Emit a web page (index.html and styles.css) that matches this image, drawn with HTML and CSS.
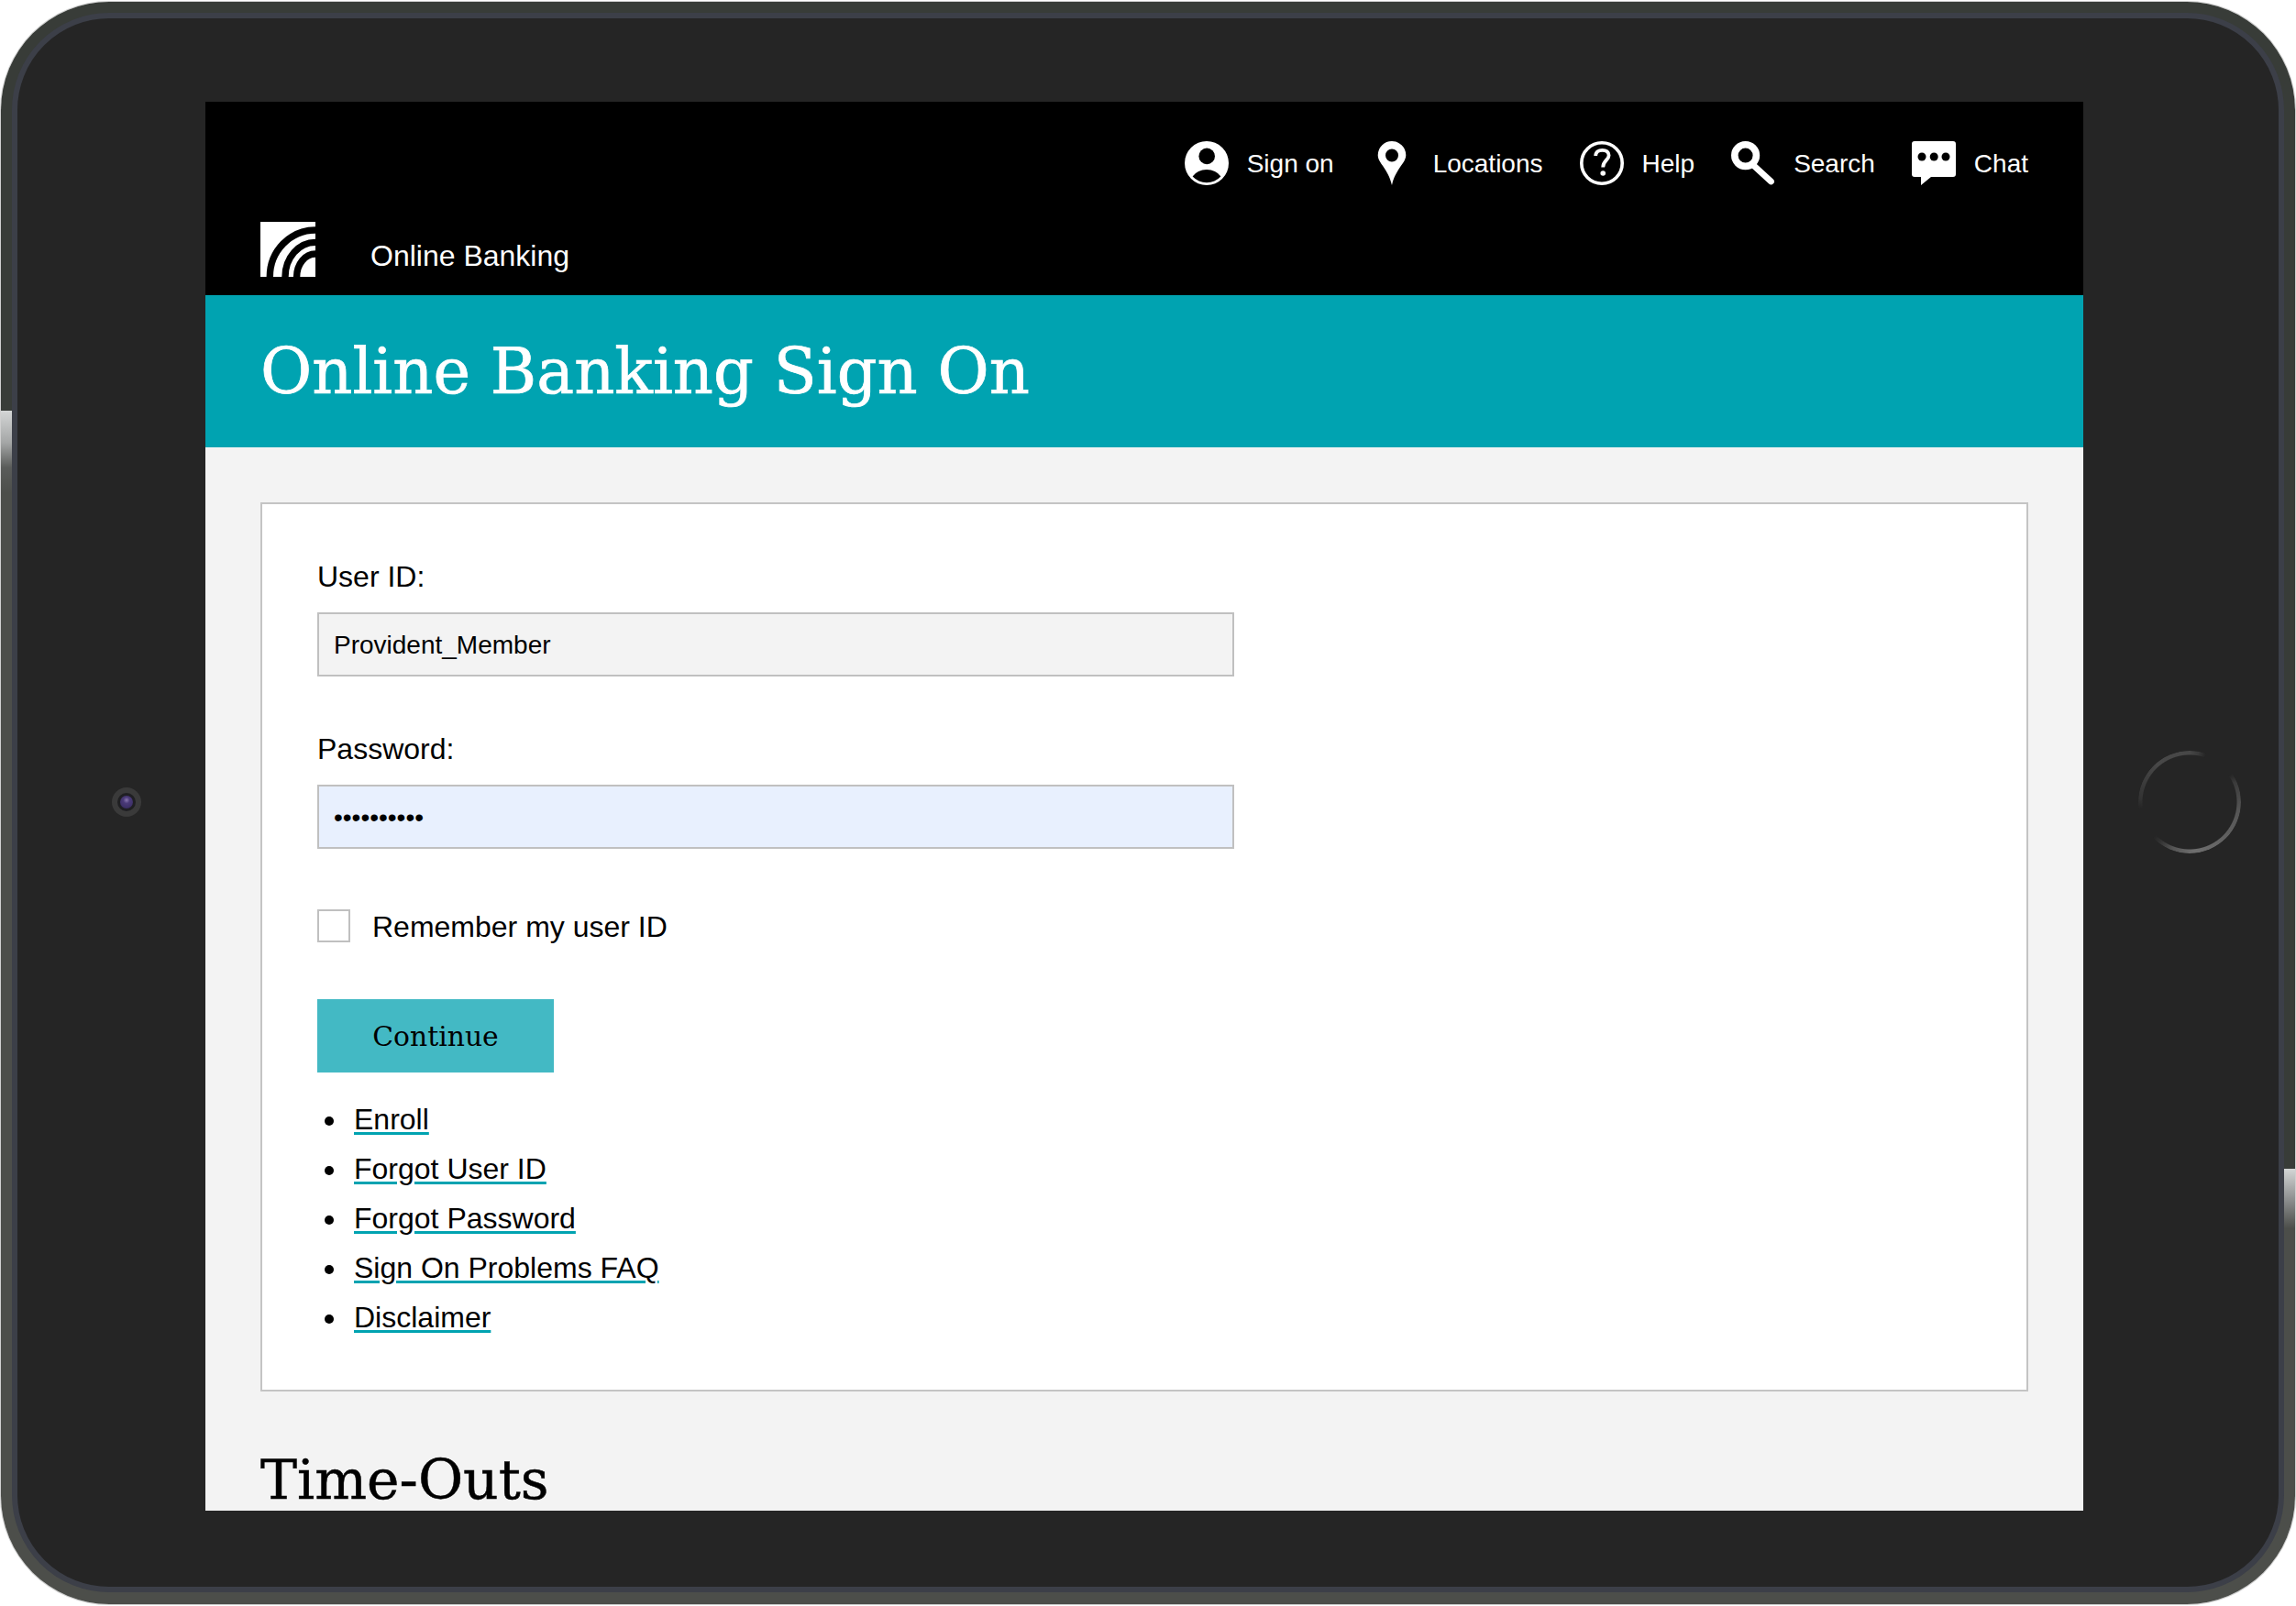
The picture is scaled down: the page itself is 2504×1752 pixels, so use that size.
FILE: index.html
```html
<!DOCTYPE html>
<html lang="en">
<head>
<meta charset="utf-8">
<title>Online Banking Sign On</title>
<link rel="stylesheet" href="styles.css">
</head>
<body>
<div class="device">
  <span class="glare glare-left"></span>
  <span class="glare glare-right"></span>
  <div class="bezel">
    <span class="camera"><span class="lens"></span></span>
    <span class="home"></span>
    <div class="screen">
      <header class="site-header">
        <nav class="nav">
          <a class="nav-item">
            <svg class="icon" viewBox="0 0 48 48"><circle cx="24" cy="24" r="24" fill="#fff"/><circle cx="24.2" cy="16.4" r="8.8" fill="#000"/><path d="M8.6 38.5Q14 31 24 31Q34 31 39.4 38.5A21 21 0 0 1 8.6 38.5Z" fill="#000"/></svg>
            <span class="nav-label">Sign on</span>
          </a>
          <a class="nav-item">
            <svg class="icon" viewBox="0 0 48 48"><path fill-rule="evenodd" fill="#fff" d="M23 0A15.3 15.3 0 0 1 38.3 15.3C38.3 24 27 30 23 48C19 30 7.7 24 7.7 15.3A15.3 15.3 0 0 1 23 0ZM23 8.5A7 7 0 1 0 23 22.5A7 7 0 1 0 23 8.5Z"/></svg>
            <span class="nav-label">Locations</span>
          </a>
          <a class="nav-item">
            <svg class="icon" viewBox="0 0 48 48"><circle cx="24" cy="24" r="22.2" fill="none" stroke="#fff" stroke-width="3.6"/><path d="M17.2 16C17.2 11.5 20.5 9.8 24.5 9.8C28.8 9.8 31.6 12 31.6 15.6C31.6 20.6 25.2 21 25.2 28.5" fill="none" stroke="#fff" stroke-width="3.8"/><circle cx="25.2" cy="35" r="2.8" fill="#fff"/></svg>
            <span class="nav-label">Help</span>
          </a>
          <a class="nav-item">
            <svg class="icon" viewBox="0 0 48 48"><circle cx="15.6" cy="15.6" r="11.8" fill="none" stroke="#fff" stroke-width="7.6"/><path d="M25 27L43.5 44" fill="none" stroke="#fff" stroke-width="6.8" stroke-linecap="round"/></svg>
            <span class="nav-label">Search</span>
          </a>
          <a class="nav-item">
            <svg class="icon" viewBox="0 0 48 48"><path fill="#fff" d="M3 0H45A3 3 0 0 1 48 3V36A3 3 0 0 1 45 39H21L10 48L10 39H3A3 3 0 0 1 0 36V3A3 3 0 0 1 3 0Z"/><circle cx="11" cy="17" r="4.5" fill="#000"/><circle cx="24.2" cy="17" r="4.5" fill="#000"/><circle cx="37" cy="17" r="4.5" fill="#000"/></svg>
            <span class="nav-label">Chat</span>
          </a>
        </nav>
        <div class="brand">
          <svg class="logo" viewBox="0 0 60 60">
            <rect width="60" height="60" fill="#fff"/>
            <g fill="none" stroke="#000" stroke-width="7.4">
              <path d="M10.3 60A49.7 51 0 0 1 60 9"/>
              <path d="M27 60A33 37.6 0 0 1 60 22.4"/>
              <path d="M39.6 60A20.4 25 0 0 1 60 35"/>
            </g>
          </svg>
          <span class="brand-name">Online Banking</span>
        </div>
      </header>
      <div class="title-band">
        <h1 class="title">Online Banking Sign On</h1>
      </div>
      <main class="content">
        <form class="card">
          <label class="field-label" for="user">User ID:</label>
          <input class="field" id="user" type="text" value="Provident_Member">
          <label class="field-label field-label-next" for="pass">Password:</label>
          <input class="field field-filled" id="pass" type="password" value="password12">
          <label class="remember"><span class="checkbox"></span><span class="remember-text">Remember my user ID</span></label>
          <button class="continue" type="button">Continue</button>
          <ul class="links">
            <li><a href="#">Enroll</a></li>
            <li><a href="#">Forgot User ID</a></li>
            <li><a href="#">Forgot Password</a></li>
            <li><a href="#">Sign On Problems FAQ</a></li>
            <li><a href="#">Disclaimer</a></li>
          </ul>
        </form>
        <h2 class="section-title">Time-Outs</h2>
      </main>
    </div>
  </div>
</div>
</body>
</html>
```
FILE: styles.css
```css
* { box-sizing: border-box; }
html, body { margin: 0; background: #fff; }
body { padding: 2px 1px; font-family: "Liberation Sans", Arial, sans-serif; color: #000; }

.device {
  position: relative;
  width: 2502px;
  height: 1748px;
  padding: 12px 12px 13px 12px;
  border-radius: 118px;
  background: linear-gradient(to bottom, #383c38 0, #383c38 1273px, #4c4e4a 1338px, #4c4e4a 100%);
  box-shadow: 0 0 0 1px rgba(170,170,170,.55);
}
.glare { position: absolute; width: 12px; }
.glare-left {
  left: 0; top: 446px; height: 892px;
  background: linear-gradient(to bottom, #d4d6d6 0, #a4a6a6 35px, #5a5c5a 62px, #4c4e4a 90px, #4c4e4a 100%);
}
.glare-right {
  right: 0; top: 1273px; height: 65px;
  background: linear-gradient(to bottom, #d4d6d6 0, #8a8c8c 35px, #4c4e4a 100%);
}

.bezel {
  position: relative;
  height: 100%;
  border: 6px solid #3c3f48;
  border-radius: 106px;
  background: #252525;
  padding: 91px 213px 83px 205px;
}
.camera {
  position: absolute;
  left: 103px; top: 839px;
  width: 32px; height: 32px;
  border-radius: 50%;
  background: #3a3a3a;
  display: flex; align-items: center; justify-content: center;
}
.lens {
  width: 20px; height: 20px;
  border-radius: 50%;
  border: 3px solid #1f1f22;
  background: radial-gradient(circle at 50% 35%, #8a78b0 0, #4a3a78 30%, #33285a 100%);
}
.home {
  position: absolute;
  left: 2313px; top: 799px;
  width: 112px; height: 112px;
  border-radius: 50%;
  background: conic-gradient(#474747 0deg, #3a3a3a 10deg, transparent 19deg, transparent 56deg, #3a3a3a 66deg, #555 100deg, #6e6e6e 175deg, #555 200deg, #333 216deg, transparent 226deg, transparent 262deg, #333 274deg, #484848 320deg, #474747 360deg);
  -webkit-mask: radial-gradient(closest-side, transparent calc(100% - 5px), #000 calc(100% - 4px));
  mask: radial-gradient(closest-side, transparent calc(100% - 5px), #000 calc(100% - 4px));
}

.screen {
  height: 100%;
  overflow: hidden;
  background: #f3f3f3;
}

.site-header {
  height: 211px;
  background: #000;
  color: #fff;
  padding: 43px 60px 0;
}
.nav {
  display: flex;
  justify-content: flex-end;
  gap: 40px;
  font-size: 28px;
}
.nav-item { display: flex; align-items: center; gap: 20px; }
.nav-label { padding-top: 2px; line-height: 46px; }
.icon { display: block; width: 48px; height: 48px; }
.brand {
  display: flex;
  align-items: flex-end;
  gap: 60px;
  margin-top: 40px;
}
.logo { display: block; width: 60px; height: 60px; }
.brand-name { font-size: 32px; line-height: 48px; margin-bottom: -1px; }

.title-band {
  height: 166px;
  background: #00a3b1;
  padding: 0 60px;
  display: flex;
  align-items: center;
}
.title {
  margin: 0;
  font-family: "DejaVu Serif", "Liberation Serif", serif;
  font-weight: 400;
  font-size: 68.6px;
  line-height: 72px;
  color: #fff;
  white-space: nowrap;
  -webkit-text-stroke: 0.7px #fff;
}

.content { padding: 60px 60px 0; }
.card {
  display: flex;
  flex-direction: column;
  align-items: flex-start;
  background: #fff;
  border: 2px solid #c4c4c4;
  padding: 55px 60px 52px;
  font-size: 32px;
}
.field-label { display: block; line-height: 48px; margin-bottom: 15px; }
.field-label-next { margin-top: 55px; }
.field {
  display: block;
  width: 1000px;
  height: 70px;
  padding: 2px 16px 0;
  border: 2px solid #c0c0c0;
  border-radius: 0;
  background: #f3f3f3;
  font-family: "Liberation Sans", Arial, sans-serif;
  font-size: 28px;
  color: #000;
  outline: none;
}
.field-filled { background: #e8f0fe; }
.remember {
  display: flex;
  align-items: center;
  gap: 24px;
  margin-top: 66px;
  height: 36px;
  line-height: 36px;
}
.remember-text { padding-top: 2px; }
.checkbox {
  display: block;
  width: 36px; height: 36px;
  border: 2px solid #c0c0c0;
  background: #fff;
}
.continue {
  display: block;
  margin-top: 62px;
  width: 258px;
  height: 80px;
  border: 0;
  border-radius: 0;
  padding: 0;
  background: #43b9c4;
  color: #000;
  font-family: "DejaVu Serif", "Liberation Serif", serif;
  font-size: 29.8px;
}
.links {
  margin: 24px 0 0;
  padding: 0 0 0 8px;
  list-style: none;
  line-height: 54px;
}
.links li {
  display: flex;
  align-items: center;
  gap: 22px;
}
.links li::before {
  content: "";
  width: 10px;
  height: 10px;
  margin-top: 3px;
  border-radius: 50%;
  background: #000;
}
.links a {
  color: #000;
  text-decoration: underline #00a3b1 3px;
  text-underline-offset: 3px;
}

.section-title {
  margin: 60px 0 0;
  font-family: "DejaVu Serif", "Liberation Serif", serif;
  font-weight: 400;
  font-size: 60px;
  line-height: 72px;
  color: #000;
  -webkit-text-stroke: 0.5px #000;
}
```
